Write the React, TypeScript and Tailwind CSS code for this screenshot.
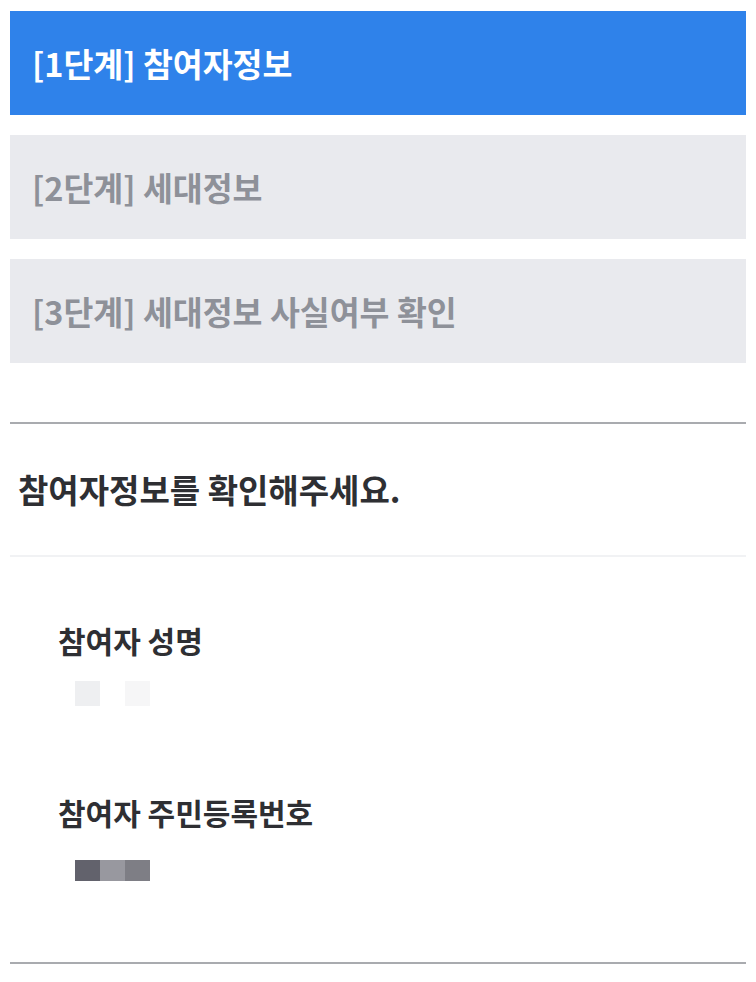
import React from 'react';

const steps = [
  { label: '[1단계] 참여자정보', active: true },
  { label: '[2단계] 세대정보', active: false },
  { label: '[3단계] 세대정보 사실여부 확인', active: false },
];

const font = { fontFamily: '"Noto Sans CJK KR", "Noto Sans", sans-serif' };

export default function App() {
  return (
    <div className="min-h-screen bg-white px-[10px] pt-[11px]" style={font}>
      {/* Steps */}
      <div className="flex flex-col gap-[20px]">
        {steps.map((s) => (
          <div
            key={s.label}
            className={`flex h-[104px] items-center px-[22px] text-[32.5px] font-bold ${
              s.active ? 'bg-[#2f82ea] text-white' : 'bg-[#e9eaee] text-[#8e9199]'
            }`}
          >
            {s.label}
          </div>
        ))}
      </div>

      <div className="mt-[59px] h-[2px] bg-[#a9abaf]" />

      <div className="flex h-[131px] items-center pl-[8px] text-[33px] font-bold text-[#2e2f33]">
        참여자정보를 확인해주세요.
      </div>

      <div className="h-[2px] bg-[#f1f2f4]" />

      <div className="pl-[48px] pt-[68px]">
        <div className="text-[30px] font-bold text-[#2e2f33] leading-none">참여자 성명</div>
        <div className="mt-[26px] ml-[17px] flex gap-[25px]">
          <div className="h-[25px] w-[25px] bg-[#eeeff1]" />
          <div className="h-[25px] w-[25px] bg-[#f6f6f7]" />
        </div>

        <div className="mt-[91px] text-[30px] font-bold text-[#2e2f33] leading-none">참여자 주민등록번호</div>
        <div className="mt-[33px] ml-[17px] flex">
          <div className="h-[21px] w-[25px] bg-[#62626c]" />
          <div className="h-[21px] w-[25px] bg-[#98989f]" />
          <div className="h-[21px] w-[25px] bg-[#7e7e85]" />
        </div>
      </div>

      <div className="mt-[81px] h-[2px] bg-[#a9abaf]" />
    </div>
  );
}
